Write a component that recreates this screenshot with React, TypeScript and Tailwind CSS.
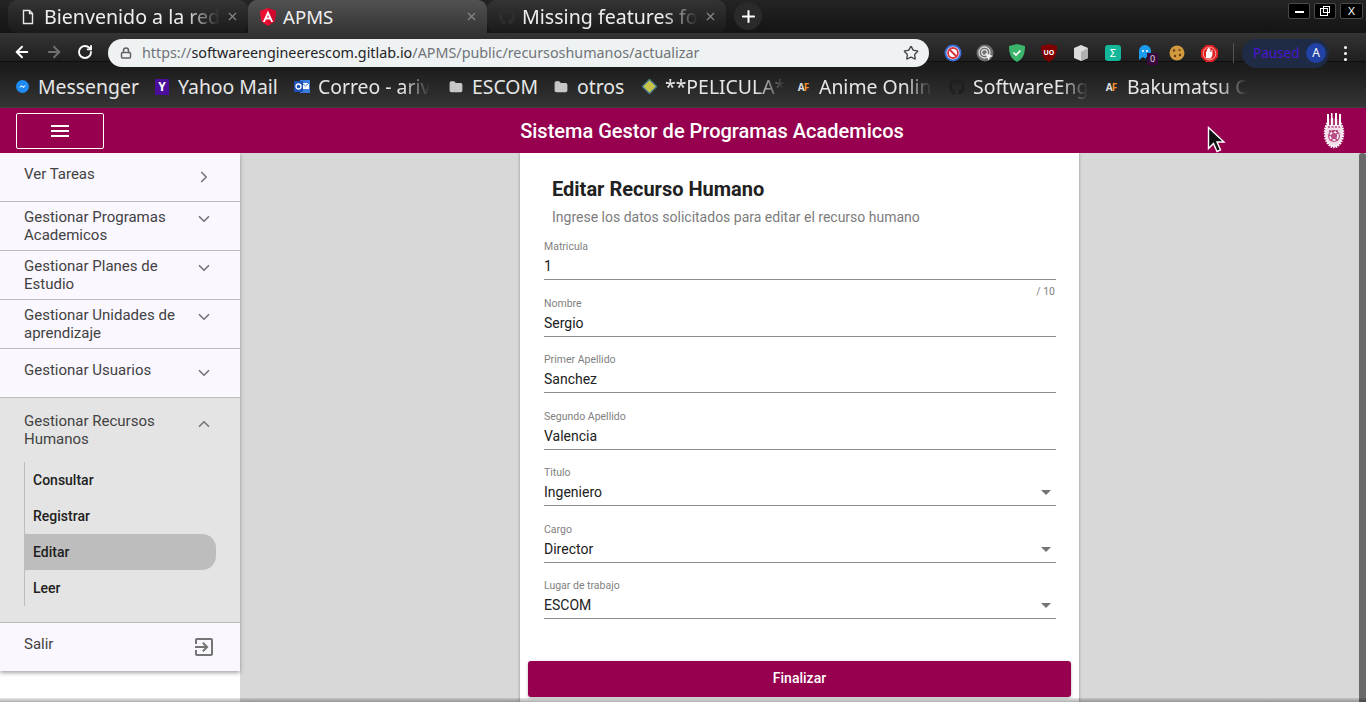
import { ArrowLeft, ArrowRight, ChevronDown, ChevronRight, ChevronUp, Lock, Plus, RotateCw, Star, X, Folder } from "lucide-react";
import { FaGithub } from "react-icons/fa";
import type { ReactNode } from "react";

const Doc = () => (
  <svg width="16" height="16" viewBox="0 0 16 16" fill="none" stroke="#e8e8e8" strokeWidth="1.4"><path d="M3.5 1.5h6l3 3v10h-9z" /><path d="M9.5 1.5v3h3" /></svg>
);
const Angular = () => (
  <svg width="16" height="18" viewBox="0 0 16 18"><path d="M8 0 0 3l1.3 10.6L8 18l6.7-4.400L16 3z" fill="#ee0f33" /><path d="M8 0 16 3l-1.300 10.600L8 18z" fill="#d0082c" /><path d="M8 2.500 2.800 14h2l1-2.600h4.400l1 2.600h2zM7 9.600l1-2.600 1 2.600z" fill="#fff" /></svg>
);

function Tab({ w, icon, text, active, fade, size = "text-[19.6px]", gap = "mr-[8px]" }: { w: string; icon: ReactNode; text: string; active?: boolean; fade: string; size?: string; gap?: string }) {
  return (
    <div className={`${w} h-[33px] flex items-center pl-[11px] pr-[9px] ${active ? "rounded-t-[9px] bg-gradient-to-b from-[#525252] to-[#343434]" : "rounded-[9px] bg-gradient-to-b from-[#343434] to-[#1a1a1a]"}`}>
      <div className={`w-[17px] flex justify-center shrink-0 ${gap}`}>{icon}</div>
      <div className="flex-1 min-w-0">
        <div className={`w-fit whitespace-nowrap ${size} text-[#eeeeee] ${fade}`}>{text}</div>
      </div>
      <X size={13} className="text-[#8a8a8a] shrink-0 ml-[2px]" />
    </div>
  );
}

function WinBtn({ w, children }: { w: string; children: ReactNode }) {
  return <div className={`${w} h-[16px] bg-black border border-[#4a4a4a] rounded-[2px] flex items-center justify-center`}>{children}</div>;
}

function Ext({ children }: { children: ReactNode }) {
  return <div className="w-[32px] h-[20px] flex items-center justify-center relative">{children}</div>;
}

function Bookmark({ w, icon, text, fade }: { w: string; icon: ReactNode; text: string; fade?: boolean }) {
  return (
    <div className={`${w} shrink-0 flex items-center`}>
      <div className="w-[16px] mr-[8px] flex justify-center shrink-0">{icon}</div>
      <div className={`whitespace-nowrap text-[19.4px] text-[#e6e6e6] ${fade ? "[mask-image:linear-gradient(to_right,black_76%,transparent)]" : ""}`}>{text}</div>
    </div>
  );
}

function AF() {
  return <span className="text-[10px] font-bold leading-none tracking-[-1px]"><span className="text-[#ddd]">A</span><span className="text-[#f0912c]">F</span></span>;
}

function NavRow({ label, icon, h = "h-[49px]", pt = "pt-[12px]", iconTop = "mt-[3px]" }: { label: ReactNode; icon: ReactNode; h?: string; pt?: string; iconTop?: string }) {
  return (
    <div className={`${h} bg-[#faf7ff] border-b border-[#bcbcbc] flex pl-[24px] pr-[27px] justify-between text-[15px] leading-[18px] text-[#424242] ${pt}`}>
      <div>{label}</div>
      <div className={`w-[18px] h-[18px] text-[#757575] ${iconTop}`}>{icon}</div>
    </div>
  );
}

function Field({ label, value, select, hint }: { label: string; value: string; select?: boolean; hint?: boolean }) {
  return (
    <div className="h-[56.5px] relative">
      <div className="text-[10.5px] leading-[14px] text-[#7f7f7f]">{label}</div>
      <div className="h-[26px] flex items-center justify-between border-b border-[#8c8c8c] text-[14px] text-[#212121]">
        <span>{value}</span>
        {select && <span className="w-0 h-0 mr-[5px] border-x-[5.5px] border-x-transparent border-t-[5.5px] border-t-[#757575]" />}
      </div>
      {hint && <div className="text-[10.5px] leading-[14px] text-right text-[#7f7f7f] pr-[1px] mt-[5px]">/ 10</div>}
    </div>
  );
}

export default function App() {
  const fadeTab = "[mask-image:linear-gradient(to_right,black_80%,transparent)]";
  return (
    <div className="w-[1366px] h-[702px] overflow-hidden flex flex-col bg-white font-['Roboto',sans-serif]">
      <div className="h-[108px] shrink-0 font-['Noto_Sans',sans-serif]">
        <div className="h-[33px] bg-gradient-to-b from-[#242424] to-[#141414] flex items-start pl-[8px]">
          <Tab w="w-[240px]" icon={<Doc />} text="Bienvenido a la red" fade={fadeTab} />
          <Tab w="w-[239px]" icon={<Angular />} text="APMS" active fade="" size="text-[18.6px]" gap="mr-[7px]" />
          <Tab w="w-[239px]" icon={<FaGithub size={16} className="text-[#2e2e2e]" />} text="Missing features fo" fade={fadeTab} gap="mr-[7px]" />
          <div className="w-[28px] h-[28px] mt-[2px] ml-[8px] rounded-full bg-[#2a2a2a] flex items-center justify-center">
            <Plus size={19} strokeWidth={2.6} className="text-white" />
          </div>
          <div className="ml-auto mt-[3px] mr-[3px] flex gap-[4px]">
            <WinBtn w="w-[22px]"><div className="w-[9px] h-[2px] bg-white mt-[2px]" /></WinBtn>
            <WinBtn w="w-[22px]"><div className="w-[8px] h-[8px] border border-white relative mt-[2px] mr-[2px]"><div className="absolute -top-[3px] -right-[3px] w-[7px] h-[7px] border border-white" /></div></WinBtn>
            <WinBtn w="w-[23px]"><span className="text-white text-[11px] leading-none font-['Liberation_Sans',sans-serif]">X</span></WinBtn>
          </div>
        </div>
        <div className="h-[38px] pt-[2px] bg-[linear-gradient(to_bottom,#343434_0px,#1f1f1f_28px,#0f0f0f_28px,#0f0f0f_29px,#1a1a1a_29px,#1e1e1e_38px)] flex items-center relative">
          <div className="w-[108px] flex pl-[13px] gap-[14px] text-white -mt-[2px]">
            <ArrowLeft size={18} strokeWidth={2.6} />
            <ArrowRight size={18} strokeWidth={2.6} className="text-[#6f6f6f]" />
            <RotateCw size={16} strokeWidth={2.8} className="mt-[1px]" />
          </div>
          <div className="w-[821px] h-[28px] bg-[#eff2f3] rounded-full flex items-center pl-[12px] pr-[10px]">
            <Lock size={12} strokeWidth={3} className="text-[#5f6368] mr-[10px]" />
            <div className="flex-1 text-[14.33px] whitespace-nowrap text-[#6f7478]">https://<span className="text-[#1f2326]">softwareengineerescom.gitlab.io</span>/APMS/public/recursoshumanos/actualizar</div>
            <Star size={16} strokeWidth={2} className="text-[#444]" />
          </div>
          <div className="flex ml-[8px] items-center">
            <Ext>
              <svg width="18" height="18" viewBox="0 0 18 18"><circle cx="9" cy="9" r="8.500" fill="#3b6fd6" /><circle cx="9" cy="9" r="6.500" fill="#fff" /><circle cx="9" cy="9" r="5" fill="none" stroke="#d8323c" strokeWidth="1.800" /><path d="m5.500 5.500 7 7" stroke="#d8323c" strokeWidth="2" /></svg>
            </Ext>
            <Ext>
              <svg width="18" height="18" viewBox="0 0 18 18" fill="none"><circle cx="9" cy="9" r="8.500" fill="#6e6e6e" /><circle cx="8.500" cy="8.500" r="5.500" stroke="#dcdcdc" strokeWidth="1.300" /><circle cx="8.500" cy="8.500" r="2.800" stroke="#dcdcdc" strokeWidth="1.300" /><path d="m9 9 8 3-3 1.200-1.300 3.300z" fill="#f2f2f2" /></svg>
            </Ext>
            <Ext><svg width="16" height="18" viewBox="0 0 16 18"><path d="M0 2 8 0l8 2c0 8-2 13-8 16C2 15 0 10 0 2z" fill="#3bb56c" /><path d="m4.500 8.500 2.500 2.500 4.500-4.500" stroke="#fff" strokeWidth="1.600" fill="none" /></svg></Ext>
            <Ext><svg width="16" height="18" viewBox="0 0 16 18"><path d="M0 2 8 0l8 2c0 8-2 13-8 16C2 15 0 10 0 2z" fill="#800000" /><text x="8" y="11" fontSize="7" fontWeight="700" textAnchor="middle" fill="#fff">UO</text></svg></Ext>
            <Ext><svg width="16" height="18" viewBox="0 0 16 18"><path d="M8 1l7 3v10l-7 3-7-3V4z" fill="#dcdcdc" /><path d="M8 8v9l7-3V4z" fill="#b0b0b0" /></svg></Ext>
            <Ext><div className="w-[16px] h-[16px] rounded-[3px] bg-[#14b79a] text-white text-[11px] leading-[16px] text-center">Σ</div></Ext>
            <Ext><svg width="12" height="17" viewBox="0 0 12 17"><path d="M0 6a6 6 0 0 1 12 0v6H7v2l-3-2-4 3z" fill="#1a9bf0" /><circle cx="4" cy="6" r="1" fill="#fff" /><circle cx="8" cy="6" r="1" fill="#fff" /></svg><div className="absolute left-[18px] top-[10px] w-[11px] h-[12px] bg-[#3a0a3c] text-[#ddd] text-[9px] leading-[12px] text-center">0</div></Ext>
            <Ext><svg width="16" height="16" viewBox="0 0 16 16"><circle cx="8" cy="8" r="7.500" fill="#d19a3f" /><circle cx="5" cy="5.500" r="1.200" fill="#6b3d12" /><circle cx="10.500" cy="5" r="1.100" fill="#6b3d12" /><circle cx="6" cy="11" r="1.200" fill="#6b3d12" /><circle cx="11" cy="10" r="1.200" fill="#6b3d12" /></svg></Ext>
            <Ext><svg width="17" height="17" viewBox="0 0 17 17"><path d="M5 0h7l5 5v7l-5 5H5l-5-5V5z" fill="#e02020" /><circle cx="8.500" cy="8.500" r="6.300" fill="#e02020" stroke="#fff" strokeWidth="0.600" /><path d="M5 13V6.500h1V4h1v2V3h1.200v3V3.500h1.200V7h1V5h1v5l-1.500 3.500z" fill="#fff" /></svg></Ext>
          </div>
          <div className="w-px h-[20px] bg-[#555] ml-[8px]" />
          <div className="ml-[8px] w-[87px] h-[29px] rounded-full bg-[#1f2a45] flex items-center justify-between pl-[11px] pr-[3px] text-[13.5px] text-[#4a18cf]">
            <span>Paused</span>
            <div className="w-[20px] h-[20px] rounded-full bg-[#2141a5] text-white text-[12px] leading-[20px] text-center">A</div>
          </div>
          <div className="ml-[15px] flex flex-col gap-[3px]">
            <div className="w-[3px] h-[3px] rounded-full bg-white" />
            <div className="w-[3px] h-[3px] rounded-full bg-white" />
            <div className="w-[3px] h-[3px] rounded-full bg-white" />
          </div>
        </div>
        <div className="h-[37px] bg-gradient-to-b from-[#1e1e1e] to-[#353535] border-b border-[#404040] flex items-center pl-[14px] pb-[4px]">
          <Bookmark w="w-[140px]" icon={<svg width="13" height="13" viewBox="0 0 13 13"><circle cx="6.500" cy="6.500" r="6.500" fill="#1f8cf5" /><path d="m2.800 8 2.600-2.800 1.700 1.300 3-1.500-2.600 2.900-1.700-1.300z" fill="#fff" /></svg>} text="Messenger" />
          <Bookmark w="w-[140px]" icon={<div className="w-[14px] h-[16px] bg-[#4a0d9c] text-white text-[12px] leading-[16px] text-center font-bold">Y</div>} text="Yahoo Mail" />
          <Bookmark w="w-[154px]" icon={<svg width="16" height="15" viewBox="0 0 16 15"><rect x="6" y="1" width="10" height="13" fill="#3a7bdc" /><rect x="8" y="4" width="7" height="6" fill="#fff" /><path d="m8 4 3.500 3L15 4" stroke="#3a7bdc" fill="none" /><rect y="2" width="9" height="11" fill="#1f4fb0" /><circle cx="4.500" cy="7.500" r="2.500" fill="none" stroke="#fff" strokeWidth="1.300" /></svg>} text="Correo - ariv" fade />
          <Bookmark w="w-[105px]" icon={<Folder size={14} fill="#c8c8c8" className="text-[#c8c8c8]" />} text="ESCOM" />
          <Bookmark w="w-[88px]" icon={<Folder size={14} fill="#c8c8c8" className="text-[#c8c8c8]" />} text="otros" />
          <Bookmark w="w-[154px]" icon={<div className="w-[11px] h-[11px] rotate-45 bg-[#c7c24a] border border-[#2e6ea8]" />} text="**PELICULA*" fade />
          <Bookmark w="w-[154px]" icon={<AF />} text="Anime Onlin" fade />
          <Bookmark w="w-[154px]" icon={<FaGithub size={16} className="text-[#1f1f1f]" />} text="SoftwareEng" fade />
          <Bookmark w="w-[135px]" icon={<AF />} text="Bakumatsu C" fade />
        </div>
      </div>

      <header className="h-[45px] shrink-0 bg-[#96004e] flex items-center pl-[16px]">
        <div className="w-[88px] h-[36px] border border-white rounded-[2px] flex items-center justify-center">
          <svg width="24" height="24" viewBox="0 0 24 24" fill="#fff"><path d="M3 18h18v-2H3v2zm0-5h18v-2H3v2zm0-7v2h18V6H3z" /></svg>
        </div>
        <div className="flex-1 text-center text-white text-[20px] font-medium">Sistema Gestor de Programas Academicos</div>
        <div className="w-[46px] flex justify-start pl-[3px]">
          <svg width="22" height="37" viewBox="0 0 22 37" fill="none">
            <ellipse cx="11" cy="21" rx="9" ry="14" fill="#f3dbe8" stroke="#fff" strokeWidth="2.500" strokeDasharray="1.500 1" />
            <path d="M4 2h2v12H4zM8 1h1.500v13H8zM12 1h2v13h-2zM16 2h2v12h-2z" fill="#fff" />
            <path d="M6 3h2v10H6zM10 5h2v8h-2zM14 3h2v10h-2z" fill="#96004e" opacity="0.75" />
            <circle cx="11" cy="24" r="6" fill="#b94f86" />
            <circle cx="11" cy="24" r="4" fill="none" stroke="#fff" strokeWidth="1.600" strokeDasharray="3 1.500" />
            <path d="M5 15h12M6 19h10" stroke="#96004e" strokeWidth="1" strokeDasharray="2 1.500" />
          </svg>
        </div>
      </header>

      <div className="flex-1 flex relative overflow-hidden bg-[#d8d8d8]">
        <aside className="w-[240px] shrink-0 bg-white">
          <div className="shadow-[0_2px_4px_rgba(0,0,0,0.35)] bg-[#faf7ff]">
            <NavRow label="Ver Tareas" icon={<ChevronRight size={18} strokeWidth={2.2} />} />
            <NavRow label={<>Gestionar Programas<br />Academicos</>} icon={<ChevronDown size={18} strokeWidth={2.2} />} pt="pt-[6px]" iconTop="mt-[2px]" />
            <NavRow label={<>Gestionar Planes de<br />Estudio</>} icon={<ChevronDown size={18} strokeWidth={2.2} />} pt="pt-[6px]" iconTop="mt-[2px]" />
            <NavRow label={<>Gestionar Unidades de<br />aprendizaje</>} icon={<ChevronDown size={18} strokeWidth={2.2} />} pt="pt-[6px]" iconTop="mt-[2px]" />
            <NavRow label="Gestionar Usuarios" icon={<ChevronDown size={18} strokeWidth={2.2} />} />
            <div className="h-[225px] bg-[#e4e4e4] border-b border-[#bcbcbc] pt-[14px]">
              <div className="flex justify-between pl-[24px] pr-[27px] text-[15px] leading-[18px] text-[#424242]">
                <div>Gestionar Recursos<br />Humanos</div>
                <ChevronUp size={18} strokeWidth={2.2} className="text-[#757575] mt-[3px]" />
              </div>
              <div className="ml-[24px] mr-[24px] mt-[14px] border-l border-[#bdbdbd] text-[14px] font-medium text-[#212121]">
                <div className="h-[36px] pl-[8px] flex items-center">Consultar</div>
                <div className="h-[36px] pl-[8px] flex items-center">Registrar</div>
                <div className="h-[36px] pl-[8px] flex items-center bg-[#bdbdbd] rounded-r-[14px]">Editar</div>
                <div className="h-[36px] pl-[8px] flex items-center">Leer</div>
              </div>
            </div>
            <div className="h-[48px] flex justify-between pl-[24px] pr-[24px] pt-[12px] text-[15px] leading-[18px] text-[#424242]">
              <div>Salir</div>
              <svg width="24" height="24" viewBox="0 0 24 24" className="text-[#757575]" fill="currentColor"><path d="M10.090 15.590 11.500 17l5-5-5-5-1.410 1.410L12.670 11H3v2h9.670l-2.580 2.590zM19 3H5c-1.110 0-2 .9-2 2v4h2V5h14v14H5v-4H3v4c0 1.100.89 2 2 2h14c1.100 0 2-.9 2-2V5c0-1.100-.9-2-2-2z" /></svg>
            </div>
          </div>
        </aside>

        <main className="flex-1 flex relative">
          <div className="w-[559px] ml-[280px] bg-white shadow-[0_0_3px_rgba(0,0,0,0.35)] px-[8px]">
            <div className="pl-[24px] pt-[23px]">
              <h1 className="text-[20px] leading-[26px] font-bold text-[#212121]">Editar Recurso Humano</h1>
              <p className="text-[14px] leading-[20px] mt-[5px] text-[#7c7c7c]">Ingrese los datos solicitados para editar el recurso humano</p>
            </div>
            <div className="pl-[16px] pr-[15px] mt-[13px]">
              <Field label="Matricula" value="1" hint />
              <Field label="Nombre" value="Sergio" />
              <Field label="Primer Apellido" value="Sanchez" />
              <Field label="Segundo Apellido" value="Valencia" />
              <Field label="Titulo" value="Ingeniero" select />
              <Field label="Cargo" value="Director" select />
              <Field label="Lugar de trabajo" value="ESCOM" select />
            </div>
            <div className="mt-[25px] h-[36px] bg-[#96004e] rounded-[3px] text-white text-[14px] font-medium flex items-center justify-center shadow-[0_1px_3px_rgba(0,0,0,0.3)]">Finalizar</div>
          </div>
          <div className="absolute right-0 top-0 w-[7px] h-full bg-[#6a6a6a] rounded-t-[3px]" />
        </main>
        <div className="absolute left-0 right-0 bottom-0 h-[4px] bg-gradient-to-b from-[#00000018] to-[#00000050]" />
      </div>

      <svg className="absolute left-[1207px] top-[126px]" width="19" height="28" viewBox="0 0 19 28">
        <path d="M1.500 1.500v21l5-5 3.500 8 3.500-1.500-3.500-8h7z" fill="#111" stroke="#fff" strokeWidth="1.400" />
      </svg>
    </div>
  );
}
